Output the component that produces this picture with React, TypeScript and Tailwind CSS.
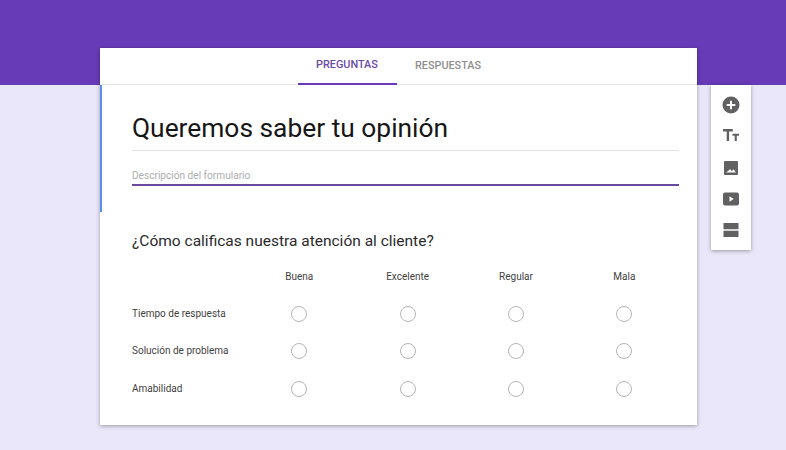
import React from 'react';

const columns = ['Buena', 'Excelente', 'Regular', 'Mala'];
const rows = ['Tiempo de respuesta', 'Solución de problema', 'Amabilidad'];

const Radio: React.FC = () => (
  <div className="flex justify-center">
    <span className="w-[14px] h-[14px] rounded-full border-[1.5px] border-[#b6b6b6] box-content" />
  </div>
);

const ToolIcon: React.FC<{ d: string }> = ({ d }) => (
  <svg className="w-6 h-6" viewBox="0 0 24 24" fill="#616161" fillRule="evenodd"><path d={d} /></svg>
);

export default function App() {
  return (
    <div className="w-[786px] h-[450px] overflow-hidden bg-[#ebe7fa] font-['Roboto',sans-serif]">
      <div className="h-[85px] bg-[#673ab7]" />
      <div className="flex items-start -mt-[37px] pl-[100px] gap-[14px]">
        <div className="w-[597px] h-[377px] bg-white shadow-[0_1px_4px_rgba(0,0,0,0.35)]">
          <div className="h-[37px] flex justify-center border-b border-[#e4e4e4]">
            <div className="w-[99px] h-[37px] flex items-center justify-center text-[10.85px] font-medium text-[#6a4aa5] border-b-2 border-[#673ab7]">PREGUNTAS</div>
            <div className="w-[103px] h-[37px] flex items-center justify-center text-[10.85px] font-medium text-[#8f8f8f]">RESPUESTAS</div>
          </div>

          <div className="h-[127px] border-l-2 border-[#5b8fe8] pl-[30px] pr-[18px]">
            <div className="h-[66px] border-b border-[#e2e2e2] pt-[25px] text-[26.35px] leading-[36px] text-[#161616]">Queremos saber tu opinión</div>
            <div className="h-[35px] border-b-2 border-[#6a4aa0] pt-[18px] text-[10.1px] leading-[14px] text-[#aeaeae]">Descripción del formulario</div>
          </div>

          <div className="pl-[32px] pr-[18px]">
            <div className="pt-[18px] text-[15.5px] leading-[22px] text-[#2a2a2a]">¿Cómo calificas nuestra atención al cliente?</div>
            <div className="grid grid-cols-[113px_repeat(4,108.4px)] items-center text-[10px] text-[#3f3f3f] mt-[16px]">
              <div className="h-[27px]" />
              {columns.map((c) => (
                <div key={c} className="h-[27px] text-center leading-[15px] pt-[1px]">{c}</div>
              ))}
              {rows.map((r) => (
                <React.Fragment key={r}>
                  <div className="h-[37.5px] flex items-center pb-[1px]">{r}</div>
                  {columns.map((c) => (
                    <Radio key={c} />
                  ))}
                </React.Fragment>
              ))}
            </div>
          </div>
        </div>

        <div className="mt-[37px] w-[40px] h-[165px] bg-white shadow-[0_1px_4px_rgba(0,0,0,0.35)] flex flex-col items-center gap-[7.25px] pt-[8px]">
          <ToolIcon d="M12 3.500a8.500 8.500 0 1 0 0 17 8.500 8.500 0 0 0 0-17zm4.300 9.500H13v3.300h-2V13H7.700v-2H11V7.700h2V11h3.300v2z" />
          <ToolIcon d="M4 5h9.800v2.400H10.100V17H7.700V7.400H4V5zM13.500 9.800H20v2h-2.200V17h-2.100v-5.200h-2.200v-2z" />
          <ToolIcon d="M6 5h12a1 1 0 0 1 1 1v12a1 1 0 0 1-1 1H6a1 1 0 0 1-1-1V6a1 1 0 0 1 1-1zM7 16.500h10l-2.300-3.200-1.900 1.900-1.600-2.200-1.500 1.600-1 .6z" />
          <ToolIcon d="M6 5.500h12a2 2 0 0 1 2 2v9a2 2 0 0 1-2 2H6a2 2 0 0 1-2-2v-9a2 2 0 0 1 2-2zM10.500 9.200v5.600l4.200-2.800-4.200-2.800z" />
          <ToolIcon d="M4.500 5h15v6.300h-15zM4.500 12.700h15V19h-15z" />
        </div>
      </div>
    </div>
  );
}
